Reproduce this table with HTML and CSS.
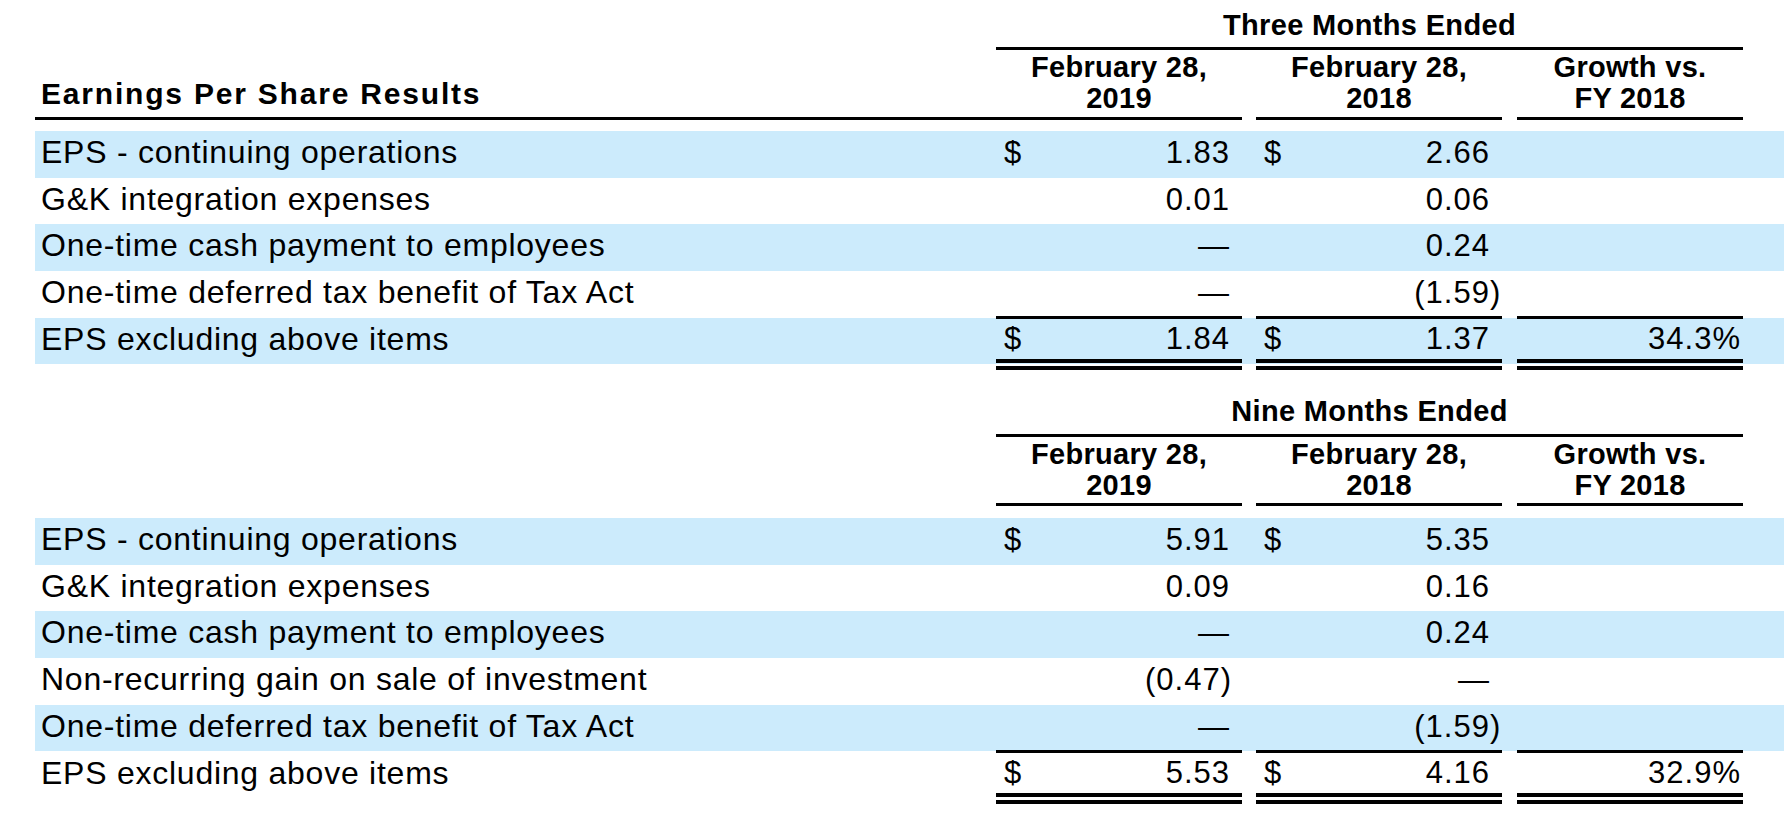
FILE: index.html
```html
<!DOCTYPE html>
<html lang="en">
<head>
<meta charset="utf-8">
<title>Earnings Per Share Results</title>
<link rel="stylesheet" href="styles.css">
</head>
<body>
<div class="report">
  <section class="block">
    <div class="row head-top">
      <div class="period">Three Months Ended</div>
    </div>
    <div class="row head">
      <div class="label-h">Earnings Per Share Results</div>
      <div class="colh">February 28,<br>2019</div>
      <div class="gap"></div>
      <div class="colh">February 28,<br>2018</div>
      <div class="gap"></div>
      <div class="colh">Growth vs.<br>FY 2018</div>
    </div>
    <div class="rows">
      <div class="row line shade">
        <div class="label">EPS - continuing operations</div>
        <div class="num"><span class="cur">$</span><span>1.83</span></div>
        <div class="gap"></div>
        <div class="num"><span class="cur">$</span><span>2.66</span></div>
        <div class="gap"></div>
        <div class="num pct"></div>
      </div>
      <div class="row line">
        <div class="label">G&amp;K integration expenses</div>
        <div class="num"><span>0.01</span></div>
        <div class="gap"></div>
        <div class="num"><span>0.06</span></div>
        <div class="gap"></div>
        <div class="num pct"></div>
      </div>
      <div class="row line shade">
        <div class="label">One-time cash payment to employees</div>
        <div class="num"><span>—</span></div>
        <div class="gap"></div>
        <div class="num"><span>0.24</span></div>
        <div class="gap"></div>
        <div class="num pct"></div>
      </div>
      <div class="row line">
        <div class="label">One-time deferred tax benefit of Tax Act</div>
        <div class="num"><span>—</span></div>
        <div class="gap"></div>
        <div class="num"><span>(1.59<span class="hang">)</span></span></div>
        <div class="gap"></div>
        <div class="num pct"></div>
      </div>
      <div class="row total total-shade">
        <div class="label">EPS excluding above items</div>
        <div class="num ruled"><span class="cur">$</span><span>1.84</span></div>
        <div class="gap"></div>
        <div class="num ruled"><span class="cur">$</span><span>1.37</span></div>
        <div class="gap"></div>
        <div class="num pct ruled"><span>34.3%</span></div>
      </div>
    </div>
  </section>

  <section class="block second">
    <div class="row head-top">
      <div class="period">Nine Months Ended</div>
    </div>
    <div class="row head">
      <div class="label-h"></div>
      <div class="colh">February 28,<br>2019</div>
      <div class="gap"></div>
      <div class="colh">February 28,<br>2018</div>
      <div class="gap"></div>
      <div class="colh">Growth vs.<br>FY 2018</div>
    </div>
    <div class="rows">
      <div class="row line shade">
        <div class="label">EPS - continuing operations</div>
        <div class="num"><span class="cur">$</span><span>5.91</span></div>
        <div class="gap"></div>
        <div class="num"><span class="cur">$</span><span>5.35</span></div>
        <div class="gap"></div>
        <div class="num pct"></div>
      </div>
      <div class="row line">
        <div class="label">G&amp;K integration expenses</div>
        <div class="num"><span>0.09</span></div>
        <div class="gap"></div>
        <div class="num"><span>0.16</span></div>
        <div class="gap"></div>
        <div class="num pct"></div>
      </div>
      <div class="row line shade">
        <div class="label">One-time cash payment to employees</div>
        <div class="num"><span>—</span></div>
        <div class="gap"></div>
        <div class="num"><span>0.24</span></div>
        <div class="gap"></div>
        <div class="num pct"></div>
      </div>
      <div class="row line">
        <div class="label">Non-recurring gain on sale of investment</div>
        <div class="num"><span>(0.47<span class="hang-s">)</span></span></div>
        <div class="gap"></div>
        <div class="num"><span>—</span></div>
        <div class="gap"></div>
        <div class="num pct"></div>
      </div>
      <div class="row line shade">
        <div class="label">One-time deferred tax benefit of Tax Act</div>
        <div class="num"><span>—</span></div>
        <div class="gap"></div>
        <div class="num"><span>(1.59<span class="hang">)</span></span></div>
        <div class="gap"></div>
        <div class="num pct"></div>
      </div>
      <div class="row total">
        <div class="label">EPS excluding above items</div>
        <div class="num ruled"><span class="cur">$</span><span>5.53</span></div>
        <div class="gap"></div>
        <div class="num ruled"><span class="cur">$</span><span>4.16</span></div>
        <div class="gap"></div>
        <div class="num pct ruled"><span>32.9%</span></div>
      </div>
    </div>
  </section>
</div>
</body>
</html>
```

FILE: styles.css
```css
* {
  box-sizing: border-box;
  margin: 0;
  padding: 0;
}

body {
  margin: 0;
  background: #ffffff;
  color: #000000;
  font-family: "Liberation Sans", Arial, sans-serif;
}

.report {
  padding-left: 35px;
  width: 1784px;
}

.block.second {
  margin-top: 17px;
}

.row {
  display: grid;
  grid-template-columns: 961px 246px 14px 246px 15px 226px;
}

/* period title */
.head-top {
  height: 50px;
}

.period {
  grid-column: 2 / 7;
  height: 50px;
  padding-top: 8.5px;
  border-bottom: 3px solid #000;
  text-align: center;
  font-weight: 700;
  font-size: 29px;
  line-height: 33px;
  letter-spacing: 0.35px;
}

/* column headings */
.head .colh,
.head .label-h {
  height: 69.5px;
  border-bottom: 3px solid #000;
}

.colh {
  padding-top: 1.75px;
  text-align: center;
  font-weight: 700;
  font-size: 29px;
  line-height: 31px;
  letter-spacing: 0.3px;
}

.label-h {
  display: flex;
  align-items: flex-end;
  padding-left: 6px;
  padding-bottom: 7.5px;
  font-weight: 700;
  font-size: 30px;
  line-height: 31px;
  letter-spacing: 1.8px;
}

.block.second .label-h {
  border-bottom: none;
}

/* body rows */
.rows {
  margin-top: 11.5px;
}

.line {
  height: 46.67px;
  font-size: 31px;
  line-height: 43px;
  letter-spacing: 1px;
}

.shade {
  background: #ccebfc;
}

.label {
  padding-left: 6px;
  font-size: 32px;
  letter-spacing: 0.75px;
  white-space: nowrap;
}

.num {
  display: flex;
  justify-content: flex-end;
  padding-left: 8px;
  padding-right: 12px;
  white-space: nowrap;
}

.num.pct {
  padding-right: 2px;
}

.cur {
  margin-right: auto;
}

.hang {
  margin-right: -11.3px;
}

.hang-s {
  margin-right: -2px;
}

/* totals */
.total {
  margin-top: -1.67px;
  height: 54px;
  font-size: 31px;
  line-height: 40px;
  letter-spacing: 1px;
}

.total-shade {
  background: linear-gradient(to bottom, transparent 0, transparent 1.67px, #ccebfc 1.67px, #ccebfc 48.3px, transparent 48.3px);
}

.total .label {
  padding-top: 3px;
}

.ruled {
  border-top: 3px solid #000;
  border-bottom: 11px double #000;
}
```
